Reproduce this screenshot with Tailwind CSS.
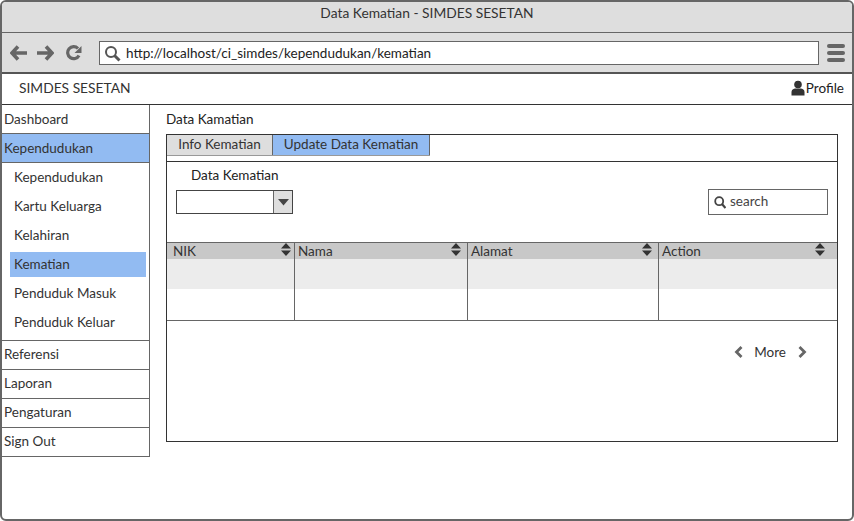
<!DOCTYPE html>
<html>
<head>
<meta charset="utf-8">
<script src="https://cdn.jsdelivr.net/npm/@tailwindcss/browser@4"></script>
</head>
<body class="bg-white">
<div class="w-[854px] h-[521px] overflow-hidden border-2 border-[#666] rounded-[6px] flex flex-col font-['Lato','Noto_Sans',sans-serif] text-[13.500px] text-[#222] bg-white">
  <div class="h-[31px] shrink-0 bg-[#dedede] border-b border-[#666] flex items-center justify-center pb-[8px] text-[#333] text-[13.800px]">Data Kematian - SIMDES SESETAN</div>
  <div class="h-[41px] shrink-0 bg-[#dedede] border-b-2 border-[#555] flex items-center pl-[8px] pr-[6px] pt-[1px]">
    <svg width="18" height="16" viewBox="0 0 18 16" class="mr-[8px]"><path d="M8 1.500 2 8l6 6.500M2.500 8H17" fill="none" stroke="#666" stroke-width="3.600"/></svg>
    <svg width="18" height="16" viewBox="0 0 18 16" class="mr-[12px]"><path d="M10 1.500 16 8l-6 6.500M15.500 8H1" fill="none" stroke="#666" stroke-width="3.600"/></svg>
    <svg width="16" height="16" viewBox="0 0 16 16" class="mr-[17px]"><path d="M13 10.500A6 6 0 1 1 12 3.500" fill="none" stroke="#666" stroke-width="3.200"/><path d="M15.500 1v7h-7z" fill="#666"/></svg>
    <div class="w-[720px] h-[24px] bg-white border border-[#666] flex items-center pl-[4px] text-[#222]">
      <svg width="17" height="17" viewBox="0 0 17 17" class="mr-[5px] shrink-0"><circle cx="7" cy="7" r="5" fill="none" stroke="#555" stroke-width="2"/><path d="m10.500 10.500 5 5" stroke="#555" stroke-width="3"/></svg>
      <span>http://localhost/ci_simdes/kependudukan/kematian</span>
    </div>
    <div class="ml-[8px] w-[18px] flex flex-col gap-[3px]">
      <div class="h-[4px] rounded-[2px] bg-[#666]"></div><div class="h-[4px] rounded-[2px] bg-[#666]"></div><div class="h-[4px] rounded-[2px] bg-[#666]"></div>
    </div>
  </div>
  <div class="h-[31px] shrink-0 -mx-[1px] border-b border-[#333] flex items-center justify-between pl-[18px] pr-[9px] pb-[2px]">
    <span class="text-[#333] text-[13.800px]">SIMDES SESETAN</span>
    <span class="flex items-center text-[#222]">
      <svg width="14" height="16" viewBox="0 0 14 16" class="mr-[1px]"><circle cx="7" cy="4.500" r="3.800" fill="#333"/><path d="M0.500 15.500V12q0-3 3.500-3.500h6q3.500.5 3.500 3.500v3.500z" fill="#333"/></svg>Profile
    </span>
  </div>
  <div class="flex flex-1 min-h-0 -ml-[1px]">
    <div class="w-[149px] shrink-0 self-start border-r border-b border-[#666] text-[#333]">
      <div class="h-[29px] border-b border-[#666] flex items-center pl-[3px] pt-[1px]">Dashboard</div>
      <div class="h-[29px] border-b border-[#666] bg-[#92bbf2] flex items-center pl-[3px] pt-[1px]">Kependudukan</div>
      <div class="h-[178px] border-b border-[#666] pl-[9px] pr-[3px] flex flex-col">
        <div class="h-[29px] flex items-center pl-[4px]">Kependudukan</div>
        <div class="h-[29px] flex items-center pl-[4px]">Kartu Keluarga</div>
        <div class="h-[29px] flex items-center pl-[4px]">Kelahiran</div>
        <div class="h-[25px] my-[2px] bg-[#92bbf2] flex items-center pl-[4px]">Kematian</div>
        <div class="h-[29px] flex items-center pl-[4px]">Penduduk Masuk</div>
        <div class="h-[29px] flex items-center pl-[4px]">Penduduk Keluar</div>
      </div>
      <div class="h-[29px] border-b border-[#666] flex items-center pl-[3px] pb-[1px]">Referensi</div>
      <div class="h-[29px] border-b border-[#666] flex items-center pl-[3px] pb-[1px]">Laporan</div>
      <div class="h-[29px] border-b border-[#666] flex items-center pl-[3px] pb-[1px]">Pengaturan</div>
      <div class="h-[28px] flex items-center pl-[3px] pb-[1px]">Sign Out</div>
    </div>
    <div class="ml-[16px] w-[672px] flex flex-col">
      <div class="h-[29px] shrink-0 flex items-center">Data Kamatian</div>
      <div class="h-[308px] border border-[#333] flex flex-col">
        <div class="h-[27px] shrink-0 border-b border-[#333]">
          <div class="flex h-[21px] border-b border-[#999] w-[263px] text-[#333]">
            <div class="w-[106px] bg-[#dedede] border-r border-[#666] flex items-center justify-center pb-[2px]">Info Kematian</div>
            <div class="w-[157px] bg-[#92bbf2] border-r border-[#666] flex items-center justify-center pb-[2px]">Update Data Kematian</div>
          </div>
        </div>
        <div class="h-[80px] shrink-0 px-[9px] flex justify-between">
          <div>
            <div class="pl-[15px] pt-[4px] leading-[18px]">Data Kematian</div>
            <div class="mt-[6px] w-[117px] h-[24px] border border-[#444] flex justify-end">
              <div class="w-[19px] bg-[#dedede] border-l border-[#666] flex items-center justify-center">
                <svg width="11" height="7" viewBox="0 0 11 7"><path d="M0 0h11L5.500 6.500z" fill="#444"/></svg>
              </div>
            </div>
          </div>
          <div class="mt-[27px] w-[120px] h-[26px] border border-[#666] flex items-center pl-[5px] pb-[2px] text-[#444]">
            <svg width="12" height="13" viewBox="0 0 12 13" class="mr-[4px] mt-[2px]"><circle cx="5.200" cy="5.200" r="4" fill="none" stroke="#444" stroke-width="1.800"/><path d="m8 8 3.500 4" stroke="#444" stroke-width="2.200"/></svg>search
          </div>
        </div>
        <div class="grid grid-cols-[128px_173px_191px_178px] h-[79px] shrink-0 border-t border-b border-[#666] grid-rows-[16px_30px_1fr] text-[#333]">
          <div class="bg-[#c8c8c8] border-r border-[#666] flex items-center justify-between pl-[6px] pr-[3px]">NIK<svg width="10" height="13" viewBox="0 0 10 13" class="self-start"><path d="M5 0l5 5.500H0zM5 13l5-5.500H0z" fill="#333"/></svg></div>
          <div class="bg-[#c8c8c8] border-r border-[#666] flex items-center justify-between pl-[3px] pr-[6px]">Nama<svg width="10" height="13" viewBox="0 0 10 13" class="self-start"><path d="M5 0l5 5.500H0zM5 13l5-5.500H0z" fill="#333"/></svg></div>
          <div class="bg-[#c8c8c8] border-r border-[#666] flex items-center justify-between pl-[3px] pr-[6px]">Alamat<svg width="10" height="13" viewBox="0 0 10 13" class="self-start"><path d="M5 0l5 5.500H0zM5 13l5-5.500H0z" fill="#333"/></svg></div>
          <div class="bg-[#c8c8c8] flex items-center justify-between pl-[3px] pr-[12px]">Action<svg width="10" height="13" viewBox="0 0 10 13" class="self-start"><path d="M5 0l5 5.500H0zM5 13l5-5.500H0z" fill="#333"/></svg></div>
          <div class="bg-[#ececec] border-r border-[#666]"></div>
          <div class="bg-[#ececec] border-r border-[#666]"></div>
          <div class="bg-[#ececec] border-r border-[#666]"></div>
          <div class="bg-[#ececec]"></div>
          <div class="border-r border-[#666]"></div>
          <div class="border-r border-[#666]"></div>
          <div class="border-r border-[#666]"></div>
          <div></div>
        </div>
        <div class="flex items-center justify-end pr-[30px] pt-[21px] text-[#333]">
          <svg width="9" height="12" viewBox="0 0 9 12"><path d="M7.500 1 2.500 6l5 5" fill="none" stroke="#666" stroke-width="2.800"/></svg>
          <span class="ml-[11px] mr-[12px]">More</span>
          <svg width="9" height="12" viewBox="0 0 9 12"><path d="M1.500 1l5 5-5 5" fill="none" stroke="#666" stroke-width="2.800"/></svg>
        </div>
      </div>
    </div>
  </div>
</div>
</body>
</html>
